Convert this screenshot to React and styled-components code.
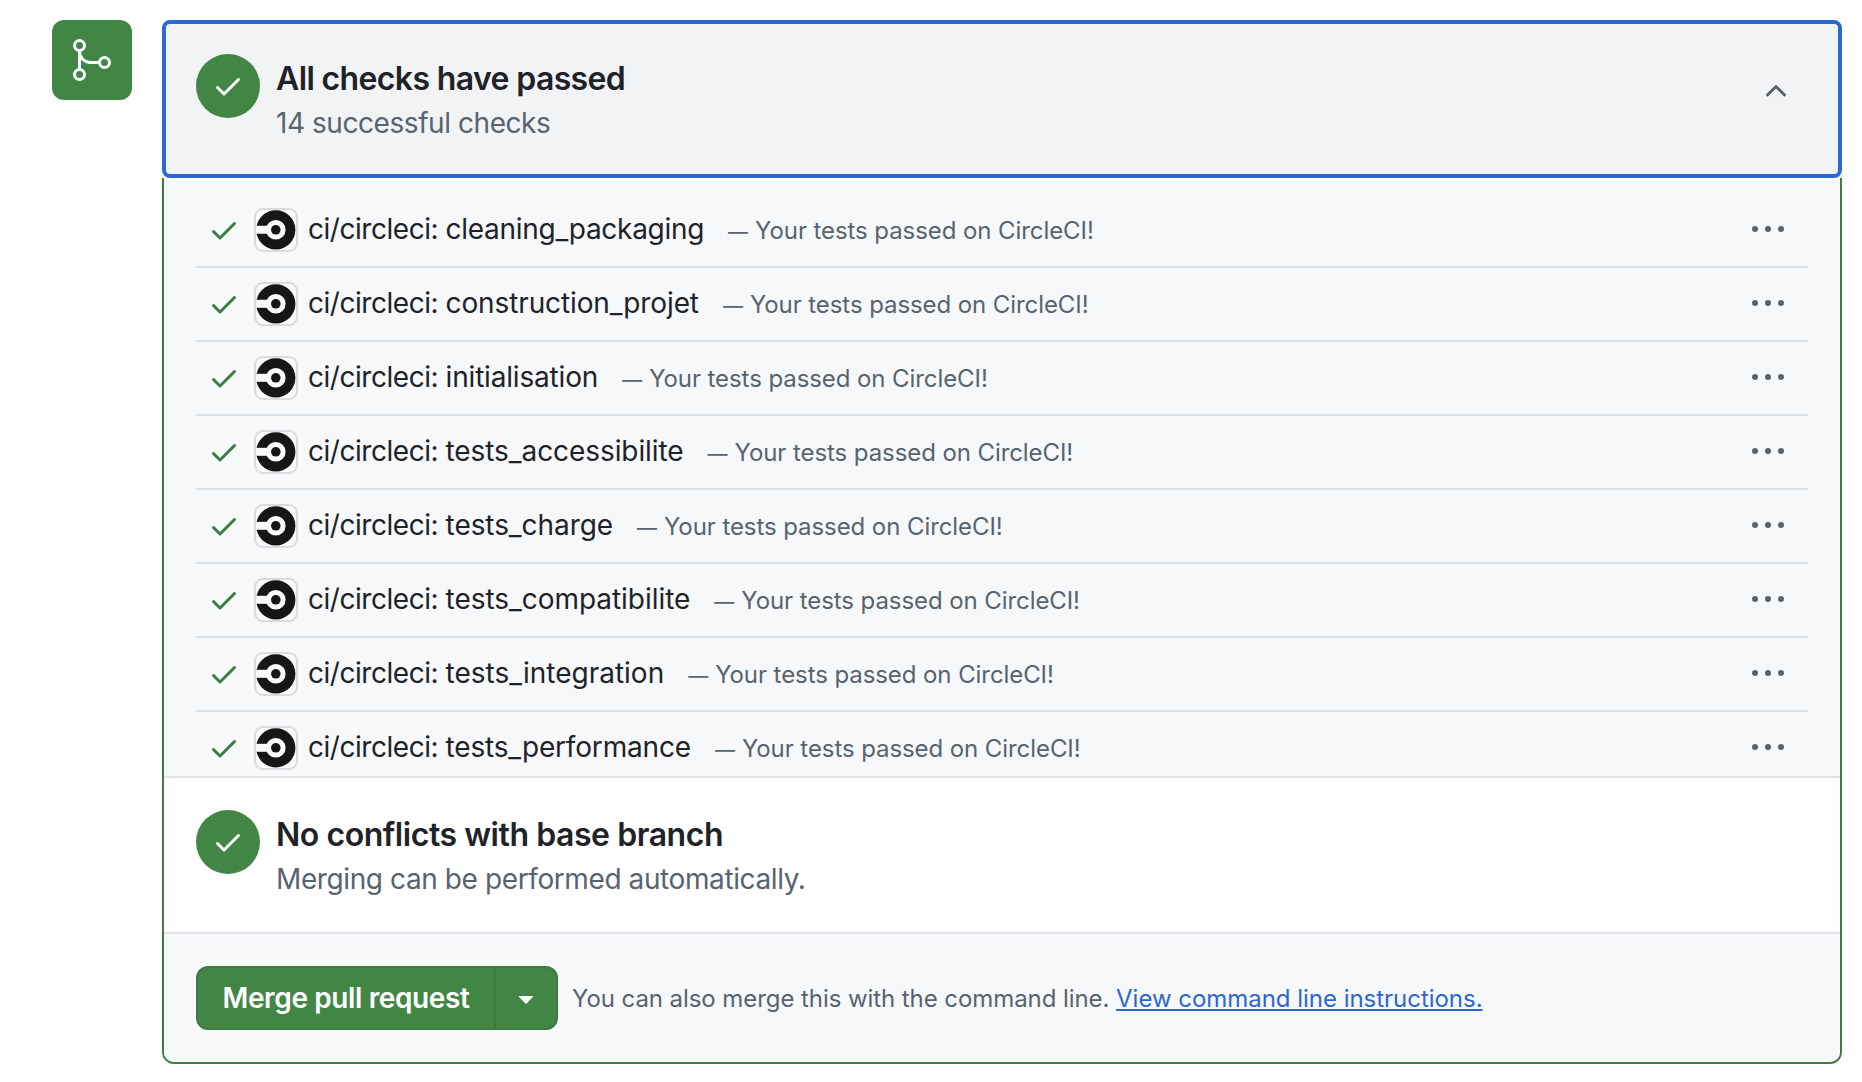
import React from "react";
import styled, { createGlobalStyle } from "styled-components";

const GlobalStyle = createGlobalStyle`
  *, *::before, *::after { box-sizing: border-box; }
  body {
    margin: 0;
    background: #fff;
    color: #1f2328;
    font-family: Inter, "Liberation Sans", sans-serif;
    overflow: hidden;
  }
`;

const Page = styled.main`
  display: flex;
  align-items: flex-start;
  gap: 30px;
  width: 1862px;
  height: 1082px;
  padding: 20px 20px 18px 52px;
`;

const MergeBadge = styled.div`
  display: flex;
  align-items: center;
  justify-content: center;
  flex: none;
  width: 80px;
  height: 80px;
  border-radius: 12px;
  background: #428646;
  color: #fff;
`;

const MergeBox = styled.section`
  display: flex;
  flex-direction: column;
  flex: 1;
  height: 1044px;
`;

const StatusSection = styled.header`
  display: flex;
  align-items: flex-start;
  gap: 16px;
  flex: none;
`;

const ChecksHeader = styled(StatusSection)`
  height: 158px;
  padding: 30px 46px 0 30px;
  border: 4px solid #2c67d3;
  border-radius: 8px;
  background: #f1f3f5;
`;

const Body = styled.div`
  display: flex;
  flex-direction: column;
  flex: 1;
  border: 2px solid #3b7f40;
  border-top: 0;
  border-radius: 0 0 12px 12px;
  overflow: hidden;
`;

const ConflictSection = styled(StatusSection)`
  height: 156px;
  padding: 32px;
  border-bottom: 2px solid #dfe2e8;
  background: #fff;
`;

const StatusCircle = styled.span`
  display: flex;
  align-items: center;
  justify-content: center;
  flex: none;
  width: 64px;
  height: 64px;
  border-radius: 50%;
  background: #428646;
  color: #fff;
`;

const StatusText = styled.div`
  flex: 1;
  padding-top: 5px;
  white-space: nowrap;
`;

const Title = styled.h3`
  margin: 0;
  font-size: 32px;
  font-weight: 620;
  line-height: 40px;
  letter-spacing: ${(p) => p.$track}px;
`;

const Subtitle = styled.p`
  margin: 4px 0 0;
  color: #59636e;
  font-size: 28px;
  line-height: 40px;
  letter-spacing: ${(p) => p.$track}px;
`;

const Toggle = styled.button`
  display: flex;
  margin: 21px 0 0;
  padding: 0;
  border: 0;
  background: none;
  color: #59636e;
`;

const CheckList = styled.ul`
  flex: none;
  height: 600px;
  margin: 0;
  padding: 14px 32px 0;
  border-top: 2px solid #fff;
  border-bottom: 2px solid #dfe2e8;
  background: #f6f8fa;
  list-style: none;
  overflow: hidden;
`;

const CheckRow = styled.li`
  display: flex;
  align-items: center;
  height: 74px;
  padding: 0 24px 2px 12px;
  box-shadow: inset 0 -2px #dbe1e7;
  color: #3b7f40;
  white-space: nowrap;
`;

const Avatar = styled.span`
  display: flex;
  align-items: center;
  justify-content: center;
  flex: none;
  width: 44px;
  height: 44px;
  margin: 0 10px 0 14px;
  border: 2px solid #d9dbde;
  border-radius: 9px;
  background: #f9fafb;
  color: #161616;
`;

const CheckName = styled.span`
  padding-bottom: 2px;
  color: #1f2328;
  font-size: 28px;
  line-height: 40px;
  letter-spacing: ${(p) => p.$track}px;
`;

const CheckContext = styled.span`
  letter-spacing: -0.46px;
`;

const CheckNote = styled.span`
  flex: 1;
  margin-left: 24px;
  padding-top: 2px;
  color: #59636e;
  font-size: 24px;
  line-height: 36px;
  letter-spacing: -0.08px;
`;

const Dash = styled.span`
  display: inline-block;
  width: 27px;
  font-size: 20px;
`;

const RowMenu = styled.button`
  display: flex;
  padding: 0;
  margin: 0;
  border: 0;
  background: none;
  color: #59636e;
`;

const Footer = styled.footer`
  display: flex;
  align-items: center;
  flex: 1;
  padding: 0 32px;
  background: #f6f8fa;
`;

const ButtonGroup = styled.div`
  display: flex;
  width: 362px;
  height: 64px;
  border: 2px solid #3c7a41;
  border-radius: 12px;
  background: #428646;
  overflow: hidden;
`;

const MergeButton = styled.button`
  width: 298px;
  padding: 0;
  border: 0;
  border-right: 2px solid #3c7a41;
  background: none;
  color: #fff;
  font: 580 28px/40px Inter, "Liberation Sans", sans-serif;
  letter-spacing: -0.38px;
`;

const CaretButton = styled.button`
  display: flex;
  align-items: center;
  justify-content: center;
  flex: 1;
  padding: 0;
  border: 0;
  background: none;
  color: #fff;
`;

const Hint = styled.p`
  margin: 2px 0 0 14px;
  color: #59636e;
  font-size: 24px;
  line-height: 36px;
  letter-spacing: -0.07px;
  white-space: nowrap;
`;

const HintLink = styled.a`
  color: #2c67d3;
  letter-spacing: -0.03px;
  text-decoration: underline;
  text-decoration-thickness: 2px;
  text-underline-offset: 2px;
  text-decoration-skip-ink: none;
`;

const Octicon = ({ d }) => (
  <svg width="32" height="32" viewBox="0 0 16 16" fill="currentColor" aria-hidden="true">
    <path d={d} />
  </svg>
);

const CHECK =
  "M13.78 4.22a.75.75 0 0 1 0 1.06l-7.25 7.25a.75.75 0 0 1-1.06 0L2.22 9.28a.751.751 0 0 1 .018-1.042.751.751 0 0 1 1.042-.018L6 10.94l6.72-6.72a.75.75 0 0 1 1.06 0Z";
const CHEVRON_UP =
  "M3.22 10.53a.749.749 0 0 1 0-1.06l4.25-4.25a.749.749 0 0 1 1.06 0l4.25 4.25a.749.749 0 1 1-1.06 1.06L8 6.811 4.28 10.53a.749.749 0 0 1-1.06 0Z";
const KEBAB =
  "M8 9a1.5 1.5 0 1 0 0-3 1.5 1.5 0 0 0 0 3ZM1.5 9a1.5 1.5 0 1 0 0-3 1.5 1.5 0 0 0 0 3Zm13 0a1.5 1.5 0 1 0 0-3 1.5 1.5 0 0 0 0 3Z";
const TRIANGLE_DOWN =
  "m4.427 7.427 3.396 3.396a.25.25 0 0 0 .354 0l3.396-3.396A.25.25 0 0 0 11.396 7H4.604a.25.25 0 0 0-.177.427Z";

const MergeIcon = () => (
  <svg width="48" height="48" viewBox="0 0 24 24" fill="none" stroke="currentColor" strokeWidth="1.5">
    <circle cx="5.75" cy="4.75" r="2.5" />
    <circle cx="5.75" cy="19.25" r="2.5" />
    <circle cx="18.25" cy="13.25" r="2.5" />
    <path d="M5.75 7.25v9.5M5.75 7.75a5.5 5.5 0 0 0 5.5 5.5h4.5" />
  </svg>
);

const CircleCiLogo = () => (
  <svg width="40" height="40" viewBox="0 0 40 40">
    <circle cx="19.8" cy="19.8" r="14.7" fill="none" stroke="currentColor" strokeWidth="9.8" />
    <path d="M0 15.8h11v8H0z" fill="#f9fafb" />
    <circle cx="19.8" cy="19.8" r="4.8" fill="currentColor" />
  </svg>
);

const checks = [
  { name: "cleaning_packaging", track: -0.29 },
  { name: "construction_projet", track: -0.12 },
  { name: "initialisation", track: -0.18 },
  { name: "tests_accessibilite", track: -0.08 },
  { name: "tests_charge", track: -0.07 },
  { name: "tests_compatibilite", track: -0.04 },
  { name: "tests_integration", track: 0 },
  { name: "tests_performance", track: -0.17 },
];

export default function App() {
  return (
    <>
      <GlobalStyle />
      <Page>
        <MergeBadge>
          <MergeIcon />
        </MergeBadge>
        <MergeBox>
          <ChecksHeader>
            <StatusCircle>
              <Octicon d={CHECK} />
            </StatusCircle>
            <StatusText>
              <Title $track={-0.63}>All checks have passed</Title>
              <Subtitle $track={-0.44}>14 successful checks</Subtitle>
            </StatusText>
            <Toggle aria-label="Collapse checks">
              <Octicon d={CHEVRON_UP} />
            </Toggle>
          </ChecksHeader>
          <Body>
            <CheckList>
              {checks.map((check) => (
                <CheckRow key={check.name}>
                  <Octicon d={CHECK} />
                  <Avatar>
                    <CircleCiLogo />
                  </Avatar>
                  <CheckName $track={check.track}>
                    <CheckContext>ci/circleci: </CheckContext>
                    {check.name}
                  </CheckName>
                  <CheckNote>
                    <Dash>—</Dash>
                    Your tests passed on CircleCI!
                  </CheckNote>
                  <RowMenu aria-label="Check options">
                    <Octicon d={KEBAB} />
                  </RowMenu>
                </CheckRow>
              ))}
            </CheckList>
            <ConflictSection>
              <StatusCircle>
                <Octicon d={CHECK} />
              </StatusCircle>
              <StatusText>
                <Title $track={-0.45}>No conflicts with base branch</Title>
                <Subtitle $track={-0.4}>Merging can be performed automatically.</Subtitle>
              </StatusText>
            </ConflictSection>
            <Footer>
              <ButtonGroup>
                <MergeButton>Merge pull request</MergeButton>
                <CaretButton aria-label="Select merge method">
                  <Octicon d={TRIANGLE_DOWN} />
                </CaretButton>
              </ButtonGroup>
              <Hint>
                You can also merge this with the command line.{" "}
                <HintLink>View command line instructions.</HintLink>
              </Hint>
            </Footer>
          </Body>
        </MergeBox>
      </Page>
    </>
  );
}
